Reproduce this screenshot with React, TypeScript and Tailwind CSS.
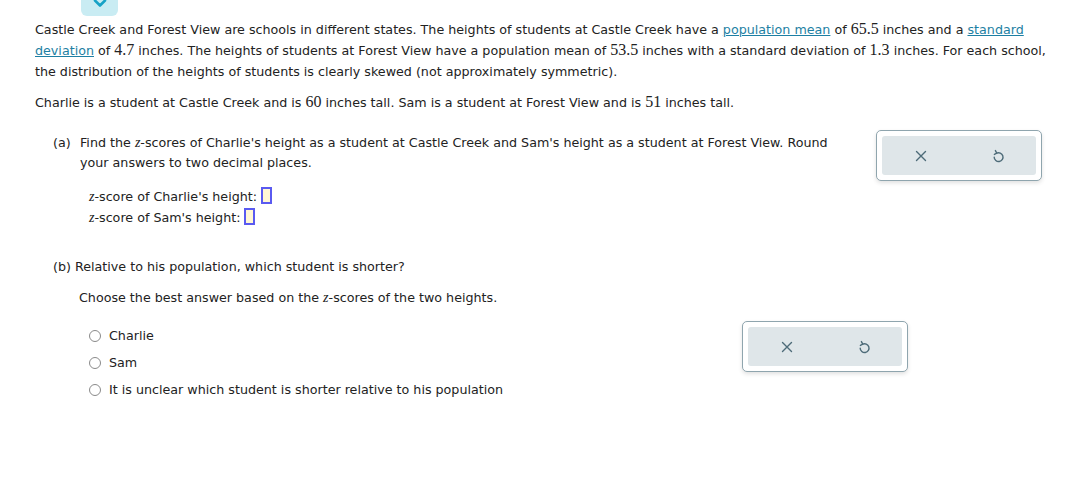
import React from "react";

const N = ({ children }: { children: React.ReactNode }) => (
  <span className="text-[16px] leading-[0]" style={{ fontFamily: '"Liberation Serif", serif' }}>
    {children}
  </span>
);
const Z = () => (
  <span className="italic text-[14px] leading-[0]" style={{ fontFamily: '"Liberation Serif", serif' }}>
    z
  </span>
);

const Input = () => (
  <span className="inline-block align-[-3px] w-[11px] h-[17px] border-2 border-[#5a5af0] bg-[#fff7d4] ml-[4px]" />
);

const Radio = () => (
  <span className="inline-block w-[12px] h-[12px] rounded-full border border-[#8a8a8a] bg-white" />
);

const Undo = () => (
  <svg width="14" height="14" viewBox="0 0 14 14" fill="none" stroke="#4d6b78" strokeWidth="1.4" strokeLinecap="round" strokeLinejoin="round">
    <path d="M5.6 4.2 A4.4 4.4 0 1 1 3.2 8.2" />
    <path d="M4.4 1.6 L5.8 4.2 L3.4 5.4" />
  </svg>
);
const X = () => (
  <svg width="12" height="12" viewBox="0 0 12 12" stroke="#4d6b78" strokeWidth="1.4" strokeLinecap="round">
    <path d="M1.5 1.5 L10.5 10.5 M10.5 1.5 L1.5 10.5" />
  </svg>
);

const Buttons = () => (
  <div className="w-[166px] h-[51px] rounded-[5px] border border-[#8fa5ae] bg-white p-[5px] shadow-[0_2px_4px_rgba(0,0,0,0.12)]">
    <div className="h-full rounded-[3px] bg-[#dfe6e9] flex">
      <div className="flex-1 flex items-center justify-center">
        <X />
      </div>
      <div className="flex-1 flex items-center justify-center">
        <Undo />
      </div>
    </div>
  </div>
);

export default function App() {
  return (
    <div
      className="w-[1076px] h-[504px] bg-white text-[#222] text-[12.7px] relative overflow-hidden"
      style={{ fontFamily: '"DejaVu Sans", Verdana, sans-serif' }}
    >
      <div className="ml-[81px] w-[37px] h-[16px] rounded-b-[6px] bg-[#c9ecf3] flex items-start justify-center">
        <svg width="14" height="9" viewBox="0 0 14 9" className="mt-[-1px]">
          <path d="M2 1.5 L7 6.5 L12 1.5" fill="none" stroke="#17a2c6" strokeWidth="2.6" strokeLinecap="round" strokeLinejoin="round" />
        </svg>
      </div>
      <div className="pl-[35px] pr-[20px]">
        <p className="leading-[21px] mt-[3px]">
          Castle Creek and Forest View are schools in different states. The heights of students at Castle Creek have a{" "}
          <span className="text-[#1d7fa3] underline">population mean</span> of <N>65.5</N> inches and a{" "}
          <span className="text-[#1d7fa3] underline">standard deviation</span> of <N>4.7</N> inches. The heights of students at
          Forest View have a population mean of <N>53.5</N> inches with a standard deviation of <N>1.3</N> inches. For each school,
          the distribution of the heights of students is clearly skewed (not approximately symmetric).
        </p>
        <p className="leading-[21px] mt-[10px]">
          Charlie is a student at Castle Creek and is <N>60</N> inches tall. Sam is a student at Forest View and is <N>51</N> inches tall.
        </p>

        <div className="flex mt-[19px] pl-[18px]">
          <div className="w-[823px]">
            <div className="flex leading-[20px] mt-[1px]">
              <span className="w-[27px]">(a)</span>
              <span className="w-[770px]">
                Find the <Z />-scores of Charlie's height as a student at Castle Creek and Sam's height as a student at Forest View. Round
                your answers to two decimal places.
              </span>
            </div>
            <div className="pl-[36px] mt-[13px] leading-[21px]">
              <div>
                <Z />-score of Charlie's height:<Input />
              </div>
              <div>
                <Z />-score of Sam's height:<Input />
              </div>
            </div>
          </div>
          <div className="-mt-[2px]">
            <Buttons />
          </div>
        </div>

        <div className="pl-[18px] mt-[29px]">
          <div className="leading-[20px]">(b) Relative to his population, which student is shorter?</div>
          <div className="pl-[26px] mt-[11px] leading-[20px]">
            Choose the best answer based on the <Z />-scores of the two heights.
          </div>
          <div className="flex mt-[13px]">
            <div className="w-[689px] pl-[36px] pt-[1px]">
              {["Charlie", "Sam", "It is unclear which student is shorter relative to his population"].map((t) => (
                <div key={t} className="flex items-center gap-[8px] h-[27px]">
                  <Radio />
                  <span>{t}</span>
                </div>
              ))}
            </div>
            <div>
              <Buttons />
            </div>
          </div>
        </div>
      </div>
    </div>
  );
}
